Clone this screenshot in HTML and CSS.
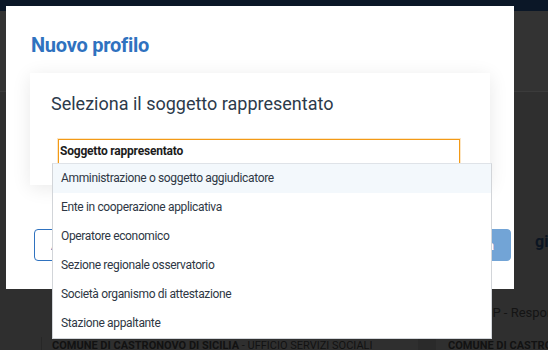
FILE: index.html
```html
<!DOCTYPE html>
<html lang="it">
<head>
    <meta charset="UTF-8" />
    <title>Nuovo profilo</title>
    <link rel="stylesheet" href="styles.css">
</head>
<body>
    <div class="backdrop">
        <div class="topbar"></div>
        <div class="pagehead"></div>
        <div class="pagebody">
            <div class="row row-title"><span>giuridici</span></div>
            <div class="row row-role"><span>RUP - Responsabile unico</span></div>
            <div class="row row-entity">
                <div class="cell cell-icon"></div>
                <div class="cell cell-name"><b>COMUNE DI CASTRONOVO DI SICILIA</b> - UFFICIO SERVIZI SOCIALI</div>
                <div class="cell cell-gap"></div>
                <div class="cell cell-name2"><b>COMUNE DI CASTRONOVO</b></div>
            </div>
        </div>
    </div>

    <div class="modal">
        <h2 class="modal-title">Nuovo profilo</h2>
        <div class="card">
            <h3 class="card-title">Seleziona il soggetto rappresentato</h3>
            <div class="field">
                <label class="field-label">Soggetto rappresentato</label>
                <ul class="menu">
                    <li class="menu-item active">Amministrazione o soggetto aggiudicatore</li>
                    <li class="menu-item">Ente in cooperazione applicativa</li>
                    <li class="menu-item">Operatore economico</li>
                    <li class="menu-item">Sezione regionale osservatorio</li>
                    <li class="menu-item">Società organismo di attestazione</li>
                    <li class="menu-item">Stazione appaltante</li>
                </ul>
            </div>
        </div>
        <div class="modal-footer">
            <button class="btn btn-outline">Annulla</button>
            <button class="btn btn-primary">Conferma</button>
        </div>
    </div>
</body>
</html>
```

FILE: styles.css
```css
:root {
    --blue: #2f72bf;
    --blue-light: #72a4d6;
    --orange: #f39a16;
    --text: #2e3744;
    --heading: #2c3a4b;
}
body {
    margin: 0;
    width: 548px;
    height: 350px;
    overflow: hidden;
    position: relative;
    font-family: Roboto, "Noto Sans", sans-serif;
}

/* page behind the dialog, already dimmed */
.backdrop {
    height: 350px;
    background-color: #2f2f2f;
    display: flex;
    flex-direction: column;
}
.topbar { height: 11px; background-color: #0b1727; }
.pagehead {
    height: 80px;
    background-color: #333333;
    border-bottom: 1px solid #3b3b3b;
}
.pagebody { flex-grow: 1; display: flex; flex-direction: column; }
.row { white-space: nowrap; overflow: hidden; }
.row-title {
    padding: 140px 0 0 535px;
    font-weight: 700;
    font-size: 16px;
    color: #0b1522;
    line-height: 20px;
}
.row-role {
    padding: 52px 0 0 476px;
    font-size: 13px;
    color: #141414;
    line-height: 18px;
}
.row-entity {
    margin-top: auto;
    display: flex;
    height: 13px;
    font-size: 11px;
    line-height: 18px;
    color: #121212;
}
.cell-icon { width: 41px; border-right: 1px solid #272727; flex-shrink: 0; }
.cell-name { width: 366px; padding-left: 10px; flex-shrink: 0; }
.cell-gap { width: 18px; background-color: #2a2a2a; flex-shrink: 0; }
.cell-name2 { padding-left: 12px; }

/* dialog */
.modal {
    position: absolute;
    left: 6px;
    top: 6px;
    width: 508px;
    height: 283px;
    box-sizing: border-box;
    background-color: #ffffff;
    padding: 27px 0 0 24px;
}
.modal-title {
    margin: 0 0 16px 1px;
    font-size: 20px;
    letter-spacing: -0.25px;
    line-height: 24px;
    font-weight: 700;
    color: var(--blue);
}
.card {
    width: 460px;
    height: 112px;
    box-sizing: border-box;
    padding: 20px;
    background-color: #ffffff;
    box-shadow: 0 3px 18px rgba(0,0,0,0.09);
}
.card-title {
    margin: 0 0 24px 1px;
    font-size: 18px;
    line-height: 22px;
    font-weight: 400;
    color: var(--heading);
}
.field {
    position: relative;
    margin-left: 8px;
    width: 402px;
    height: 38px;
    box-sizing: border-box;
    border: 1px solid var(--orange);
    box-shadow: 0 0 0 1px rgba(243,154,22,0.25);
}
.field-label {
    display: block;
    padding: 0 1px;
    font-size: 12px;
    letter-spacing: -0.2px;
    line-height: 22px;
    font-weight: 700;
    color: #1c1c1c;
}
.menu {
    position: absolute;
    left: -7px;
    top: 23px;
    width: 440px;
    box-sizing: border-box;
    margin: 0;
    padding: 0;
    list-style: none;
    background-color: #ffffff;
    border: 1px solid #d2d5d9;
    border-top-color: #dfe3e8;
    z-index: 10;
}
.menu-item {
    height: 29px;
    line-height: 29px;
    padding: 0 8px;
    font-size: 12px;
    letter-spacing: -0.35px;
    color: var(--text);
    white-space: nowrap;
}
.menu-item.active { background-color: #f3f8fc; }

.modal-footer {
    display: flex;
    justify-content: space-between;
    margin: 44px 3px 0 4px;
}
.btn {
    height: 32px;
    padding: 0 16px;
    border-radius: 4px;
    font-family: inherit;
    font-size: 13px;
    font-weight: 700;
}
.btn-outline {
    background-color: #ffffff;
    border: 1px solid var(--blue);
    color: var(--blue);
}
.btn-primary {
    background-color: var(--blue-light);
    border: 1px solid var(--blue-light);
    color: #ffffff;
}
```
